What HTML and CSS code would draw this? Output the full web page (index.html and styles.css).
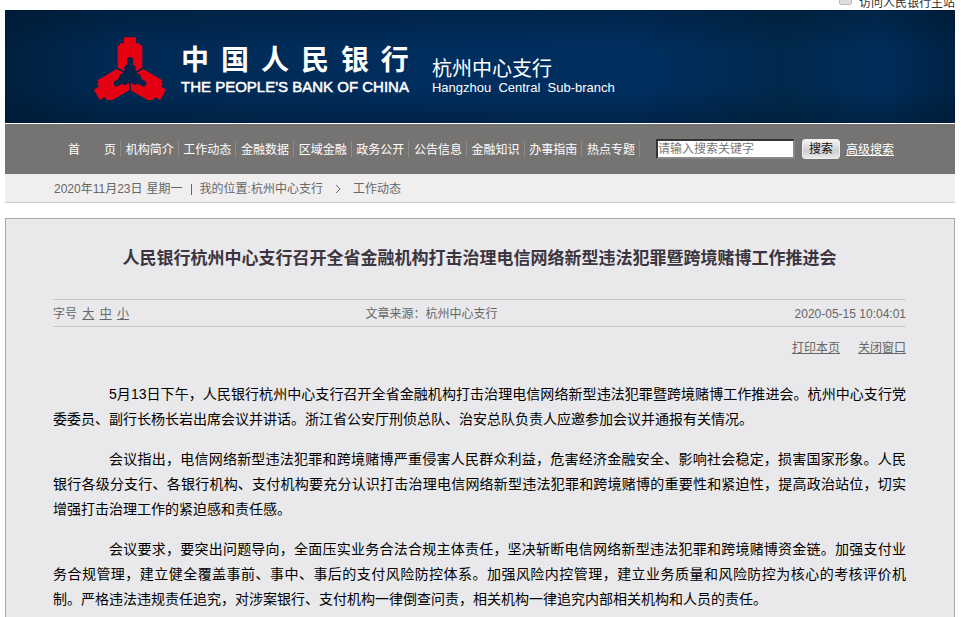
FILE: index.html
```html
<!DOCTYPE html>
<html lang="zh-CN">
<head>
    <meta charset="UTF-8">
    <meta name="viewport" content="width=device-width, initial-scale=1.0">
    <title>中国人民银行杭州中心支行</title>
    <link rel="stylesheet" href="styles.css">
</head>
<body>
    <div class="page">
        <!-- top link -->
        <div class="topbar">
            <span class="top-icon"></span>
            <a href="#">访问人民银行主站</a>
        </div>

        <!-- banner -->
        <header class="banner">
            <svg class="emblem" viewBox="-108 -118 216 190" aria-hidden="true">
                <defs>
                    <path id="arm" fill="#e50012" d="M-18-115H18V-97H30V-91H37V-24L2-3H-2L-37-24V-91H-30V-97H-18Z"/>
                    <path id="slot" fill="#04244a" d="M-17 8V-26L-9-34V-50L-5-55H5L9-50V-34L17-26V8Z"/>
                </defs>
                <use href="#arm"/>
                <use href="#arm" transform="rotate(120)"/>
                <use href="#arm" transform="rotate(240)"/>
                <use href="#slot"/>
                <use href="#slot" transform="rotate(120)"/>
                <use href="#slot" transform="rotate(240)"/>
                <path d="M0 0V44M0 0L-38-22M0 0L38-22" stroke="#04244a" stroke-width="4"/>
            </svg>
            <div class="bank">
                <div class="bank-cn"><span>中</span><span>国</span><span>人</span><span>民</span><span>银</span><span>行</span></div>
                <div class="bank-en">THE PEOPLE'S BANK OF CHINA</div>
            </div>
            <div class="branch">
                <div class="branch-cn">杭州中心支行</div>
                <div class="branch-en">Hangzhou  Central  Sub-branch</div>
            </div>
        </header>

        <!-- menu and search -->
        <nav class="menu">
            <ul>
                <li><a href="#">首　　页</a></li>
                <li><a href="#">机构简介</a></li>
                <li><a href="#">工作动态</a></li>
                <li><a href="#">金融数据</a></li>
                <li><a href="#">区域金融</a></li>
                <li><a href="#">政务公开</a></li>
                <li><a href="#">公告信息</a></li>
                <li><a href="#">金融知识</a></li>
                <li><a href="#">办事指南</a></li>
                <li><a href="#">热点专题</a></li>
            </ul>
            <form class="search">
                <input type="text" aria-label="搜索关键字" placeholder="请输入搜索关键字">
                <button type="button">搜索</button>
                <a href="#">高级搜索</a>
            </form>
        </nav>

        <div class="crumbs">
            <span>2020年11月23日</span>
            <span>星期一</span>
            <i class="bar"></i>
            <span>我的位置:<a href="#">杭州中心支行</a></span>
            <svg class="arrow" viewBox="0 0 6 10" aria-hidden="true"><path d="M1 1L5 5L1 9" fill="none" stroke="#666" stroke-width="1"/></svg>
            <a href="#">工作动态</a>
        </div>

        <!-- article -->
        <main class="article">
            <h1>人民银行杭州中心支行召开全省金融机构打击治理电信网络新型违法犯罪暨跨境赌博工作推进会</h1>
            <div class="meta">
                <div class="size">字号 <a href="#">大</a> <a href="#">中</a> <a href="#">小</a></div>
                <div class="source">文章来源：杭州中心支行</div>
                <div class="time">2020-05-15 10:04:01</div>
            </div>
            <div class="tools">
                <a href="#">打印本页</a>
                <a href="#">关闭窗口</a>
            </div>
            <div class="content">
                <p>5月13日下午，人民银行杭州中心支行召开全省金融机构打击治理电信网络新型违法犯罪暨跨境赌博工作推进会。杭州中心支行党委委员、副行长杨长岩出席会议并讲话。浙江省公安厅刑侦总队、治安总队负责人应邀参加会议并通报有关情况。</p>
                <p>会议指出，电信网络新型违法犯罪和跨境赌博严重侵害人民群众利益，危害经济金融安全、影响社会稳定，损害国家形象。人民银行各级分支行、各银行机构、支付机构要充分认识打击治理电信网络新型违法犯罪和跨境赌博的重要性和紧迫性，提高政治站位，切实增强打击治理工作的紧迫感和责任感。</p>
                <p>会议要求，要突出问题导向，全面压实业务合法合规主体责任，坚决斩断电信网络新型违法犯罪和跨境赌博资金链。加强支付业务合规管理，建立健全覆盖事前、事中、事后的支付风险防控体系。加强风险内控管理，建立业务质量和风险防控为核心的考核评价机制。严格违法违规责任追究，对涉案银行、支付机构一律倒查问责，相关机构一律追究内部相关机构和人员的责任。</p>
            </div>
        </main>
    </div>
</body>
</html>
```

FILE: styles.css
```css
*{
    margin: 0;
    padding: 0;
    box-sizing: border-box;
}
body{
    font-family: "Liberation Sans", "Noto Sans CJK SC", sans-serif;
    font-size: 12px;
    line-height: 16px;
    color: #666;
    background: #fff;
    text-spacing-trim: space-all;
}
a{
    color: inherit;
    text-decoration: none;
}
.page{
    display: flex;
    flex-direction: column;
    min-height: 100vh;
    padding: 0 6px 0 5px;
}

/* top link */
.topbar{
    display: flex;
    justify-content: flex-end;
    align-items: flex-end;
    gap: 7px;
    height: 10px;
    overflow: hidden;
    color: #333;
}
.topbar a{
    line-height: 14px;
}
.top-icon{
    width: 13px;
    height: 12px;
    margin-bottom: 5px;
    background: #ddd;
    border: 1px solid #bbb;
    border-radius: 2px;
}

/* banner */
.banner{
    display: flex;
    align-items: flex-start;
    height: 113px;
    padding: 26px 0 0 89px;
    color: #fff;
    background:
        linear-gradient(to bottom, rgba(0,20,40,0.4), rgba(0,20,40,0) 35%, rgba(0,20,40,0) 70%, rgba(0,20,40,0.4)),
        linear-gradient(to right, #00203f, #002a54 12%, #002e5e 45%, #002f60 66%, #00294c 82%, #002e5a 92%, #002244);
}
.emblem{
    width: 72px;
    height: 64px;
}
.bank{
    margin: 7px 0 0 15px;
}
.bank-cn{
    display: flex;
    justify-content: space-between;
    font-size: 28px;
    font-weight: bold;
    line-height: 36px;
}
.bank-en{
    font-size: 15px;
    line-height: 16px;
    -webkit-text-stroke: 0.5px #fff;
}
.branch{
    margin: 21px 0 0 23px;
}
.branch-cn{
    font-size: 20px;
    line-height: 24px;
}
.branch-en{
    font-size: 13px;
    line-height: 14px;
    white-space: pre;
}

/* menu */
.menu{
    display: flex;
    align-items: center;
    height: 50px;
    margin-top: 1px;
    padding: 0 61px 0 59px;
    color: #fff;
    background: #757473;
}
.menu ul{
    display: flex;
    flex: 1;
    justify-content: space-between;
    list-style: none;
}
.menu li{
    padding: 2px 4px 0;
    border-right: 1px solid #8c8b8a;
    white-space: nowrap;
    line-height: 14px;
}
.menu li + li{
    padding-left: 3px;
}
.search{
    display: flex;
    align-items: center;
    margin-left: 16px;
}
.search input{
    width: 139px;
    height: 20px;
    border: 2px inset #888;
    background: #fff;
    font: inherit;
    color: #333;
}
.search input::placeholder{
    color: #777;
}
.search button{
    width: 38px;
    height: 20px;
    margin: 0 6px 0 7px;
    border: 1px solid #eee;
    border-radius: 3px;
    background: linear-gradient(#f4f4f4, #cfcfd1 60%, #e8e8e8);
    font: inherit;
    color: #111;
}
.search a{
    padding-top: 2px;
    text-decoration: underline;
}

.crumbs{
    display: flex;
    align-items: center;
    gap: 4px;
    height: 29px;
    padding: 2px 0 0 49px;
    border-bottom: 1px solid #ccc;
    background: #f0eeef;
}
.bar{
    width: 1px;
    height: 11px;
    margin: 0 4px;
    background: #666;
}
.arrow{
    width: 6px;
    height: 10px;
    margin: 0 8px;
}

/* article */
.article{
    flex: 1;
    margin-top: 15px;
    padding: 28px 48px 0 47px;
    border: 1px solid #aaa;
    border-bottom: none;
    background: #e9e9eb;
}
.article h1{
    font-size: 17px;
    line-height: 24px;
    text-align: center;
    color: #3c3540;
}
.meta{
    display: grid;
    grid-template-columns: 1fr auto 1fr;
    align-items: center;
    height: 28px;
    margin-top: 28px;
    padding-top: 2px;
    border-top: 1px solid #c8c8ca;
    border-bottom: 1px solid #c8c8ca;
}
.source{
    padding-right: 96px;
}
.size a{
    margin-left: 2px;
}
.size a, .tools a{
    text-decoration: underline;
}
.time{
    text-align: right;
}
.tools{
    display: flex;
    justify-content: flex-end;
    gap: 18px;
    padding: 13px 0 26px;
}
.content{
    font-size: 14px;
    line-height: 25px;
    color: #000;
    text-align: justify;
}
.content p{
    text-indent: 56px;
}
.content p + p{
    margin-top: 15px;
}
```
